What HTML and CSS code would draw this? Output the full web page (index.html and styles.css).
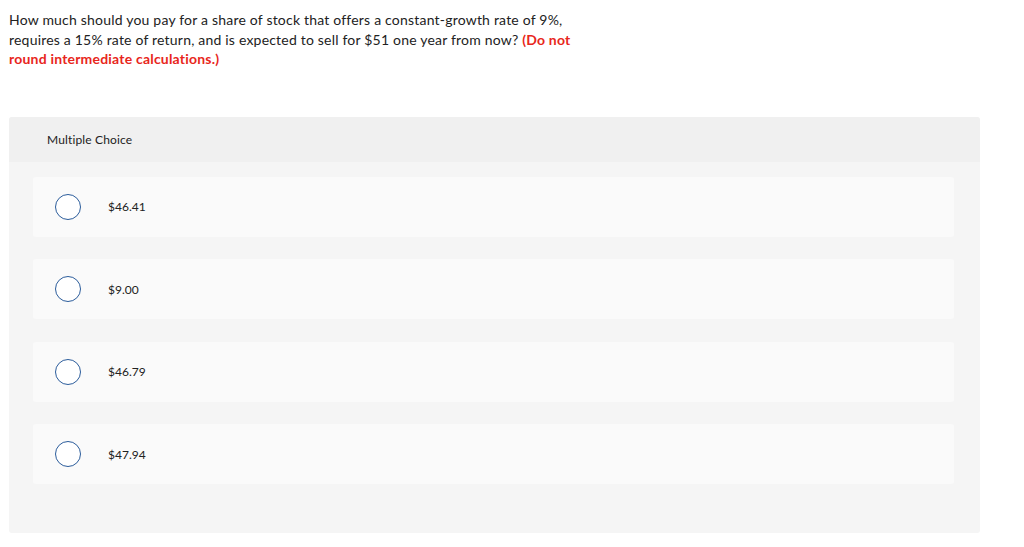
FILE: index.html
```html
<!DOCTYPE html>
<html>
<head>
<meta charset="utf-8">
<link rel="stylesheet" href="styles.css">
</head>
<body>
<div class="page">
  <p class="question">How much should you pay for a share of stock that offers a constant-growth rate of 9%, requires a 15% rate of return, and is expected to sell for $51 one year from now? <strong class="note">(Do not round intermediate calculations.)</strong></p>
  <div class="panel">
    <div class="panel-head">Multiple Choice</div>
    <div class="options">
      <div class="option"><span class="radio"></span><span class="label">$46.41</span></div>
      <div class="option"><span class="radio"></span><span class="label">$9.00</span></div>
      <div class="option"><span class="radio"></span><span class="label">$46.79</span></div>
      <div class="option"><span class="radio"></span><span class="label">$47.94</span></div>
    </div>
  </div>
</div>
</body>
</html>
```
FILE: styles.css
```css
html, body {
  margin: 0;
  padding: 0;
  background: #fff;
}
body {
  font-family: Lato, "Open Sans", sans-serif;
  color: #222;
}
.page {
  padding: 10px 44px 0 9px;
}
.question {
  margin: 0;
  width: 578px;
  font-size: 14px;
  letter-spacing: 0.2px;
  line-height: 19.5px;
  color: #222;
}
.note {
  color: #e8261c;
  font-weight: 700;
}
.panel {
  margin-top: 48px;
  background: #f5f5f5;
  border-radius: 3px;
  padding-bottom: 49px;
}
.panel-head {
  background: #f0f0f0;
  height: 45px;
  display: flex;
  align-items: center;
  padding-left: 38px;
  font-size: 12px;
  letter-spacing: 0.15px;
  color: #222;
  border-radius: 3px 3px 0 0;
}
.options {
  padding: 15px 26px 0 24px;
  display: flex;
  flex-direction: column;
  gap: 22.6px;
}
.option {
  background: #fafafa;
  height: 60px;
  border-radius: 3px;
  display: flex;
  align-items: center;
  padding-left: 22px;
}
.radio {
  width: 24px;
  height: 24px;
  border: 1px solid #2b5c9b;
  border-radius: 50%;
  background: #fff;
  flex: none;
}
.label {
  margin-left: 27px;
  font-size: 12px;
  color: #222;
}
```
